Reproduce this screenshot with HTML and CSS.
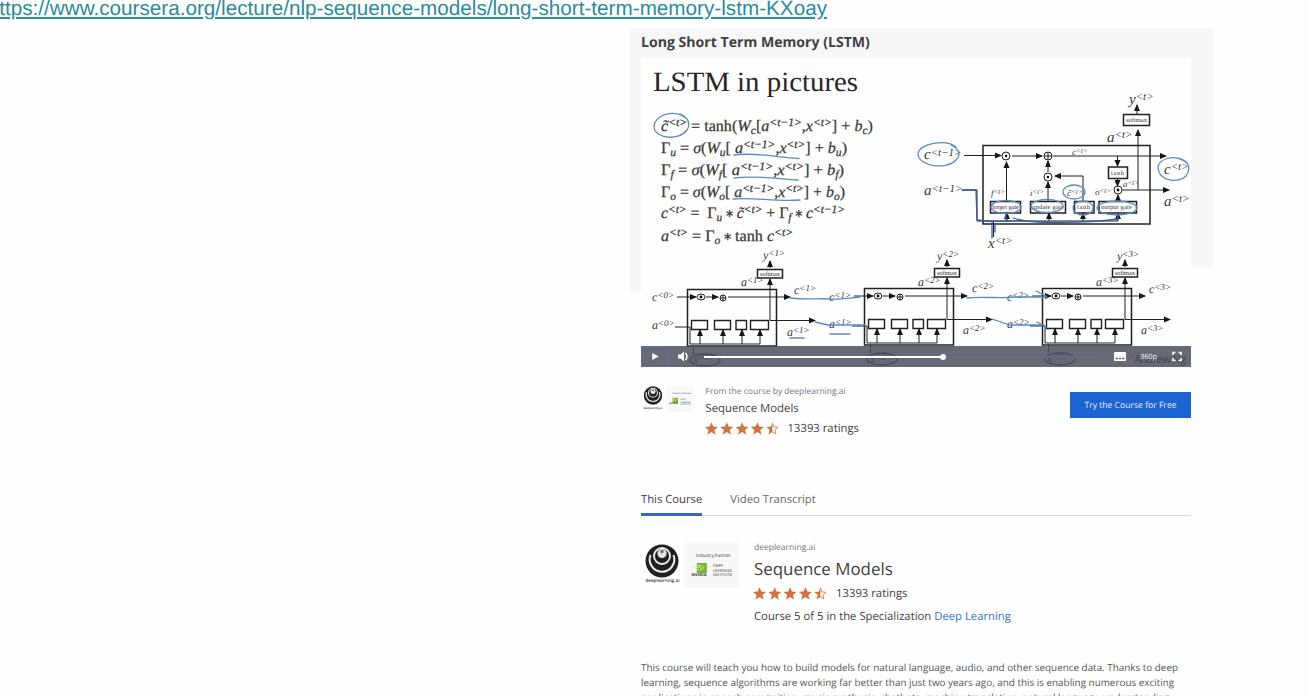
FILE: index.html
```html
<!DOCTYPE html>
<html lang="en">
<head>
<meta charset="utf-8">
<title>Long Short Term Memory (LSTM)</title>
<link rel="stylesheet" href="styles.css">
</head>
<body>
<svg class="defs" aria-hidden="true">
  <defs>
    <marker id="arrow" viewBox="0 0 7 6" markerWidth="7.500" markerHeight="6.500" refX="6" refY="3" orient="auto" markerUnits="userSpaceOnUse"><path d="M0 0L7 3L0 6z" fill="#161616"/></marker>
    <symbol id="star" viewBox="0 0 12 12"><path d="M6 .2L7.700 4.200L12 4.500L8.700 7.300L9.800 11.700L6 9.300L2.200 11.700L3.300 7.300L0 4.500L4.300 4.200z"/></symbol>
    <symbol id="star-half" viewBox="0 0 12 12"><path d="M6 .2V9.300L2.200 11.700L3.300 7.300L0 4.500L4.300 4.200z"/><path d="M6 .8L7.500 4.500L11.300 4.800L8.300 7.400L9.300 11.200L6 9.200" fill="none" stroke="#cf7440" stroke-width=".8"/></symbol>
    <symbol id="rings" viewBox="0 0 34 34"><circle cx="17" cy="17" r="16.500" fill="#202022"/><g fill="none" stroke="#ececec"><path d="M5.500 11A12.300 12.300 0 1 0 28.500 11" stroke-width="2"/><circle cx="17" cy="12" r="8" stroke-width="1.900"/></g><circle cx="17" cy="9.500" r="4.600" fill="#e4e4e4"/><circle cx="17" cy="7.500" r="1.800" fill="#77777a"/></symbol>
    <symbol id="eye" viewBox="0 0 15 11"><path d="M4 0H15V11H4z" fill="#79b52a"/><path d="M0 6Q5 0 12 5Q7 10 3 6Q6 3 9 6" fill="none" stroke="#d3e8b0" stroke-width="1"/></symbol>
    <g id="cell">
      <path class="frame" d="M687.500 289.500H776.500V346H687.500z"/>
      <path class="wire" marker-end="url(#arrow)" d="M677 297H696"/>
      <path class="wire" marker-end="url(#arrow)" d="M706 297H718"/>
      <path class="wire" marker-end="url(#arrow)" d="M728 297H790"/>
      <ellipse class="wire" cx="701" cy="297" rx="4" ry="3"/><circle cx="701" cy="297" r="1.400"/>
      <circle class="wire" cx="723" cy="298" r="3"/><path class="wire" d="M720 298H726M723 295V301"/>
      <path class="gate" d="M691.500 320.500H707.500V329.500H691.500zM714.500 320.500H730.500V329.500H714.500zM736 320.500H746.500V329.500H736zM750.500 320.500H768.500V329.500H750.500z"/>
      <path class="wire" d="M675 327H690V344H760"/>
      <path class="wire" marker-end="url(#arrow)" d="M700 344V330"/><path class="wire" marker-end="url(#arrow)" d="M723 344V330"/><path class="wire" marker-end="url(#arrow)" d="M742 344V330"/><path class="wire" marker-end="url(#arrow)" d="M760 344V330"/>
      <path class="wire" marker-end="url(#arrow)" d="M770 320.500H815"/><path class="wire" marker-end="url(#arrow)" d="M770 320.500V279"/><path class="wire" marker-end="url(#arrow)" d="M770 268V261"/>
      <path class="frame" d="M757.500 269.500H782.500V278H757.500z"/><text class="tiny" x="760" y="276" textLength="20">softmax</text>
      <path class="wire" d="M693.500 346V354"/><ellipse class="ring" cx="705" cy="360" rx="15" ry="6"/>
    </g>
  </defs>
</svg>

<header class="source"><a class="source-link">https://www.coursera.org/lecture/nlp-sequence-models/long-short-term-memory-lstm-KXoay</a></header>

<main class="page">
  <section class="lecture">
    <h1 class="lecture-title">Long Short Term Memory (LSTM)</h1>
    <div class="player">
      <svg class="slide" viewBox="641 58 550 309" width="550" height="309">
        <text class="slide-title" x="653" y="90.500" textLength="205" lengthAdjust="spacingAndGlyphs">LSTM in pictures</text>
        <g class="math">
          <text x="661" y="131" textLength="212" lengthAdjust="spacingAndGlyphs"><tspan class="i">c̃</tspan><tspan class="s" dy="-5">&lt;t&gt;</tspan><tspan dy="5"> = tanh(</tspan><tspan class="i">W</tspan><tspan class="s" dy="3">c</tspan><tspan dy="-3">[</tspan><tspan class="i">a</tspan><tspan class="s" dy="-5">&lt;t−1&gt;</tspan><tspan dy="5">,</tspan><tspan class="i">x</tspan><tspan class="s" dy="-5">&lt;t&gt;</tspan><tspan dy="5">] + </tspan><tspan class="i">b</tspan><tspan class="s" dy="3">c</tspan><tspan dy="-3">)</tspan></text>
          <text x="661" y="153" textLength="186" lengthAdjust="spacingAndGlyphs">Γ<tspan class="s" dy="3">u</tspan><tspan dy="-3"> = </tspan><tspan class="i">σ</tspan>(<tspan class="i">W</tspan><tspan class="s" dy="3">u</tspan><tspan dy="-3">[ </tspan><tspan class="i">a</tspan><tspan class="s" dy="-5">&lt;t−1&gt;</tspan><tspan dy="5">,</tspan><tspan class="i">x</tspan><tspan class="s" dy="-5">&lt;t&gt;</tspan><tspan dy="5">] + </tspan><tspan class="i">b</tspan><tspan class="s" dy="3">u</tspan><tspan dy="-3">)</tspan></text>
          <text x="661" y="175" textLength="183" lengthAdjust="spacingAndGlyphs">Γ<tspan class="s" dy="3">f</tspan><tspan dy="-3"> = </tspan><tspan class="i">σ</tspan>(<tspan class="i">W</tspan><tspan class="s" dy="3">f</tspan><tspan dy="-3">[ </tspan><tspan class="i">a</tspan><tspan class="s" dy="-5">&lt;t−1&gt;</tspan><tspan dy="5">,</tspan><tspan class="i">x</tspan><tspan class="s" dy="-5">&lt;t&gt;</tspan><tspan dy="5">] + </tspan><tspan class="i">b</tspan><tspan class="s" dy="3">f</tspan><tspan dy="-3">)</tspan></text>
          <text x="661" y="197" textLength="184" lengthAdjust="spacingAndGlyphs">Γ<tspan class="s" dy="3">o</tspan><tspan dy="-3"> = </tspan><tspan class="i">σ</tspan>(<tspan class="i">W</tspan><tspan class="s" dy="3">o</tspan><tspan dy="-3">[ </tspan><tspan class="i">a</tspan><tspan class="s" dy="-5">&lt;t−1&gt;</tspan><tspan dy="5">,</tspan><tspan class="i">x</tspan><tspan class="s" dy="-5">&lt;t&gt;</tspan><tspan dy="5">] + </tspan><tspan class="i">b</tspan><tspan class="s" dy="3">o</tspan><tspan dy="-3">)</tspan></text>
          <text x="661" y="218" textLength="184" lengthAdjust="spacingAndGlyphs"><tspan class="i">c</tspan><tspan class="s" dy="-5">&lt;t&gt;</tspan><tspan dy="5"> = &#160;Γ</tspan><tspan class="s" dy="3">u</tspan><tspan dy="-4" class="op"> ∗ </tspan><tspan class="i" dy="1">c̃</tspan><tspan class="s" dy="-5">&lt;t&gt;</tspan><tspan dy="5"> + Γ</tspan><tspan class="s" dy="3">f</tspan><tspan dy="-4" class="op"> ∗ </tspan><tspan class="i" dy="1">c</tspan><tspan class="s" dy="-5">&lt;t−1&gt;</tspan></text>
          <text x="661" y="241" textLength="132" lengthAdjust="spacingAndGlyphs"><tspan class="i">a</tspan><tspan class="s" dy="-5">&lt;t&gt;</tspan><tspan dy="5"> = Γ</tspan><tspan class="s" dy="3">o</tspan><tspan dy="-4" class="op"> ∗ </tspan><tspan dy="1">tanh </tspan><tspan class="i">c</tspan><tspan class="s" dy="-5">&lt;t&gt;</tspan></text>
        </g>

        <path class="frame" d="M983 145.500H1150V224H983z"/>
        <g class="wire">
          <path marker-end="url(#arrow)" d="M964 155.500H1001"/><path marker-end="url(#arrow)" d="M1012 156H1042"/><path marker-end="url(#arrow)" d="M1053 156H1166"/>
          <path marker-end="url(#arrow)" d="M1006.500 201V162"/><path marker-end="url(#arrow)" d="M1048 201V182"/><path marker-end="url(#arrow)" d="M1048 172V161"/>
          <path marker-end="url(#arrow)" d="M1083 201V176H1055"/><path marker-end="url(#arrow)" d="M1117.500 156V166"/><path marker-end="url(#arrow)" d="M1117.500 179V186"/><path marker-end="url(#arrow)" d="M1118 201V195"/>
          <path marker-end="url(#arrow)" d="M1122 190H1169"/><path marker-end="url(#arrow)" d="M1138 190V130"/><path marker-end="url(#arrow)" d="M1137 114V105"/>
          <path marker-end="url(#arrow)" d="M1007 221V213"/><path marker-end="url(#arrow)" d="M1049 221V213"/><path marker-end="url(#arrow)" d="M1083 221V213"/><path marker-end="url(#arrow)" d="M1118 221V213"/>
          <path d="M962 190H977V221H1118M993.500 221V237"/>
          <circle cx="1006" cy="156" r="4"/><circle cx="1048" cy="156" r="4"/><path d="M1044 156H1052M1048 152V160"/><circle cx="1048" cy="177" r="4"/><circle cx="1118" cy="190" r="4"/>
        </g>
        <g><circle cx="1006" cy="156" r="1.200"/><circle cx="1048" cy="177" r="1.200"/><circle cx="1118" cy="190" r="1.400"/></g>
        <path class="frame" d="M1123.500 114.500H1149.500V125.500H1123.500zM1108.500 167H1127.500V178.500H1108.500zM990.500 201.500H1020.500V213H990.500zM1030.500 201.500H1065.500V213H1030.500zM1074.500 201.500H1094V213H1074.500zM1099 201.500H1136.500V213H1099z"/>
        <g class="tiny"><text x="1126" y="122" textLength="21">softmax</text><text x="1111" y="175" textLength="13">tanh</text><text x="992" y="209" textLength="27">forget gate</text><text x="1032" y="209" textLength="32">update gate</text><text x="1077" y="209" textLength="13">tanh</text><text x="1101" y="209" textLength="31">output gate</text></g>
        <g class="label big">
          <text x="924" y="159">c<tspan class="s" dy="-3">&lt;t−1&gt;</tspan></text><text x="924" y="195">a<tspan class="s" dy="-3">&lt;t−1&gt;</tspan></text>
          <text x="1129" y="104">y<tspan class="s" dy="-4">&lt;t&gt;</tspan></text><text x="1107" y="142">a<tspan class="s" dy="-4">&lt;t&gt;</tspan></text>
          <text x="1164" y="174">c<tspan class="s" dy="-4">&lt;t&gt;</tspan></text><text x="1164" y="206">a<tspan class="s" dy="-4">&lt;t&gt;</tspan></text><text x="988" y="248">x<tspan class="s" dy="-4">&lt;t&gt;</tspan></text>
        </g>
        <g class="label small">
          <text x="1072" y="155">c<tspan class="s" dy="-2">&lt;t&gt;</tspan></text><text x="991" y="196">f<tspan class="s" dy="-2">&lt;t&gt;</tspan></text><text x="1030" y="196">i<tspan class="s" dy="-2">&lt;t&gt;</tspan></text><text x="1067" y="196">c̃<tspan class="s" dy="-2">&lt;t&gt;</tspan></text><text x="1095" y="195">o<tspan class="s" dy="-2">&lt;t&gt;</tspan></text><text x="1123" y="187">a<tspan class="s" dy="-2">&lt;t&gt;</tspan></text>
        </g>

        <use href="#cell"/><use href="#cell" x="177" y="-1"/><use href="#cell" x="355" y="-1"/>
        <g class="label">
          <text x="652" y="301">c<tspan class="s" dy="-3">&lt;0&gt;</tspan></text><text x="652" y="329">a<tspan class="s" dy="-3">&lt;0&gt;</tspan></text>
          <text x="763" y="259">y<tspan class="s" dy="-3">&lt;1&gt;</tspan></text><text x="741" y="286">a<tspan class="s" dy="-3">&lt;1&gt;</tspan></text><text x="794" y="294">c<tspan class="s" dy="-3">&lt;1&gt;</tspan></text><text x="787" y="336">a<tspan class="s" dy="-3">&lt;1&gt;</tspan></text><text x="829" y="301">c<tspan class="s" dy="-3">&lt;1&gt;</tspan></text><text x="829" y="328">a<tspan class="s" dy="-3">&lt;1&gt;</tspan></text>
          <text x="937" y="260">y<tspan class="s" dy="-3">&lt;2&gt;</tspan></text><text x="918" y="286">a<tspan class="s" dy="-3">&lt;2&gt;</tspan></text><text x="972" y="292">c<tspan class="s" dy="-3">&lt;2&gt;</tspan></text><text x="963" y="334">a<tspan class="s" dy="-3">&lt;2&gt;</tspan></text><text x="1007" y="301">c<tspan class="s" dy="-3">&lt;2&gt;</tspan></text><text x="1007" y="328">a<tspan class="s" dy="-3">&lt;2&gt;</tspan></text>
          <text x="1117" y="260">y<tspan class="s" dy="-3">&lt;3&gt;</tspan></text><text x="1096" y="286">a<tspan class="s" dy="-3">&lt;3&gt;</tspan></text><text x="1149" y="293">c<tspan class="s" dy="-3">&lt;3&gt;</tspan></text><text x="1141" y="334">a<tspan class="s" dy="-3">&lt;3&gt;</tspan></text>
          <text x="693" y="363">x<tspan class="s" dy="-3">&lt;1&gt;</tspan></text><text x="870" y="363">x<tspan class="s" dy="-3">&lt;2&gt;</tspan></text><text x="1047" y="363">x<tspan class="s" dy="-3">&lt;3&gt;</tspan></text>
        </g>
        <g class="pen">
          <path d="M687 119C674 108 654 115 654 127C655 139 679 141 687 130C691 124 688 117 680 114"/>
          <path d="M734 155C752 152 775 157 799 158.500M734 178C756 175 778 179 798 180M733 199C753 197 776 202 800 200"/>
          <path d="M956 147C946 139 919 143 918 154C919 167 947 170 956 160C961 155 960 149 951 145"/>
          <path d="M1184 161C1174 154 1158 159 1158 168C1159 181 1179 184 1186 176C1192 167 1188 160 1177 158"/>
          <ellipse cx="1006" cy="207" rx="15" ry="6.500"/><ellipse cx="1047" cy="206" rx="16" ry="6.500"/><ellipse cx="1083" cy="208" rx="10" ry="7"/><ellipse cx="1117" cy="208" rx="20" ry="7"/><ellipse cx="1074" cy="192" rx="11" ry="7"/>
          <path class="dark" d="M962 190H976L977 220C1000 223 1012 220 1024 221S1080 224 1118 219V213M992 221V238M995 224V232M1006 220V214M1013 218C1027 222 1040 223 1055 222"/>
          <path d="M790 298C808 300 820 298 830 299S848 298 860 297M815 322L828 325H865M790 338H804M830 334H850"/>
          <path d="M967 298C985 296 1000 299 1014 297H1047M992 319L1010 325H1044M1036 291L1046 296M1037 322L1046 327"/>
        </g>
        <text class="credit" x="1134" y="363" textLength="52">Andrew Ng</text>
      </svg>
      <div class="controls">
        <svg class="play" width="27" height="21" viewBox="0 0 27 21"><path d="M11 6.500L18 10.500L11 14.500z" fill="#fff"/></svg>
        <svg class="volume" width="28" height="21" viewBox="0 0 28 21"><path d="M10 8.500H12.500L16 5.500V15.500L12.500 12.500H10z" fill="#fff"/><path d="M17.500 7Q20.500 10.500 17.500 14" fill="none" stroke="#fff" stroke-width="1.500"/></svg>
        <div class="track"><div class="played"></div><div class="knob"></div></div>
        <svg class="captions" width="12" height="21" viewBox="0 0 12 21"><rect y="6" width="12" height="9" rx="1" fill="#fff"/><path d="M1.500 12.500H4M5 12.500H7M8 12.500H10.500" stroke="#5a5e6c" stroke-width="1.300"/></svg>
        <span class="quality">360p</span>
        <svg class="expand" width="10" height="21" viewBox="0 0 10 21"><path d="M1 9V6.500H3.500M6.500 6.500H9V9M9 12V14.500H6.500M3.500 14.500H1V12" fill="none" stroke="#fff" stroke-width="1.600"/></svg>
      </div>
    </div>
  </section>

  <section class="promo">
    <div class="logos logos-small">
      <svg width="22" height="26" viewBox="0 0 22 26"><use href="#rings" x="2.500" y="0" width="19" height="19"/><text class="logo-word" x="2.500" y="23" textLength="19" lengthAdjust="spacingAndGlyphs">deeplearning.ai</text></svg>
      <svg class="partner" width="28" height="26" viewBox="0 0 56 50" preserveAspectRatio="none"><text class="partner-label" x="12" y="16" textLength="38">Industry Partner</text><use href="#eye" x="9" y="22" width="15" height="11"/><text class="nvidia" x="7" y="35" textLength="17">NVIDIA</text><g class="institute"><text x="29" y="27" textLength="11">DEEP</text><text x="29" y="32" textLength="20">LEARNING</text><text x="29" y="36" textLength="20">INSTITUTE</text></g></svg>
    </div>
    <div class="promo-text">
      <p class="from">From the course by deeplearning.ai</p>
      <p class="promo-name">Sequence Models</p>
      <div class="rating"><svg class="stars" width="74" height="13"><use href="#star" width="13" height="13"/><use href="#star" x="15.300" width="13" height="13"/><use href="#star" x="30.600" width="13" height="13"/><use href="#star" x="45.900" width="13" height="13"/><use href="#star-half" x="61.200" width="12.500" height="13"/></svg><span class="count">13393 ratings</span></div>
    </div>
    <button class="try">Try the Course for Free</button>
  </section>

  <nav class="tabs"><a class="tab active">This Course</a><a class="tab">Video Transcript</a></nav>

  <section class="course">
    <div class="logos">
      <svg width="40" height="47" viewBox="0 0 40 47"><use href="#rings" x="5" y="2" width="34" height="34"/><text class="logo-word wide" x="5.500" y="40" textLength="34">deeplearning.ai</text></svg>
      <svg class="partner" width="55" height="46" viewBox="0 0 55 46"><text class="partner-label" x="12" y="15" textLength="35">Industry Partner</text><use href="#eye" x="9" y="21" width="14" height="10"/><text class="nvidia" x="7.500" y="33.500" textLength="15">NVIDIA</text><g class="institute"><text x="29" y="25" textLength="10">DEEP</text><text x="29" y="29.500" textLength="19">LEARNING</text><text x="29" y="33.500" textLength="19">INSTITUTE</text></g></svg>
    </div>
    <div class="course-text">
      <p class="by">deeplearning.ai</p>
      <h2 class="course-name">Sequence Models</h2>
      <div class="rating"><svg class="stars" width="74" height="13"><use href="#star" width="13" height="13"/><use href="#star" x="15.300" width="13" height="13"/><use href="#star" x="30.600" width="13" height="13"/><use href="#star" x="45.900" width="13" height="13"/><use href="#star-half" x="61.200" width="12.500" height="13"/></svg><span class="count">13393 ratings</span></div>
      <p class="spec">Course 5 of 5 in the Specialization <a class="spec-link">Deep Learning</a></p>
    </div>
  </section>
  <p class="about">This course will teach you how to build models for natural language, audio, and other sequence data. Thanks to deep<br>learning, sequence algorithms are working far better than just two years ago, and this is enabling numerous exciting<br>applications in speech recognition, music synthesis, chatbots, machine translation, natural language understanding,</p>
</main>
</body>
</html>
```
FILE: styles.css
```css
* { box-sizing: border-box; }
body { margin: 0; height: 696px; overflow: hidden; background: #fefefe; color: #3f3f3f; font-family: "Open Sans", "Noto Sans", sans-serif; text-rendering: geometricPrecision; }
p, h1, h2 { margin: 0; font-weight: 400; white-space: nowrap; }
.defs { position: absolute; width: 0; height: 0; }
.source { display: flex; justify-content: flex-end; width: 827px; height: 28px; overflow: hidden; }
.source-link { flex: none; font: 20.7px/22px "Liberation Sans", sans-serif; color: #2c8c98; text-decoration: underline; text-decoration-thickness: 1.5px; text-underline-offset: 1.5px; white-space: nowrap; margin-top: -2px; }
.page { width: 583px; margin-left: 630px; }
.lecture { padding: 0 22px 0 11px; background: linear-gradient(#f7f7f8, #f7f7f8) 0 0 / 11px 265px no-repeat, linear-gradient(#f7f7f8, #f7f7f8) 100% 0 / 572px 30px no-repeat, linear-gradient(#f7f7f8, #f7f7f8) 100% 0 / 22px 239px no-repeat; }
.lecture-title { height: 30px; font-size: 14.1px; line-height: 30px; font-weight: 700; color: #404040; }
.player { position: relative; width: 550px; height: 309px; background: #fefefe; }
.slide { display: block; }
text { font-family: "Liberation Serif", serif; fill: #383838; white-space: pre; }
.slide-title { font-size: 28px; fill: #262626; }
.math text { font-size: 16px; stroke: #383838; stroke-width: .25px; }
.math .s { font-size: 11.5px; font-style: italic; }
.math .op { font-size: 11px; }
.i { font-style: italic; }
.label text { font-size: 12px; font-style: italic; }
.label .s { font-size: 9px; }
.label.big text { font-size: 15px; }
.label.big .s { font-size: 11px; }
.label.small text { font-size: 9px; }
.label.small .s { font-size: 7px; }
.tiny { font-size: 6.5px; }
.frame { fill: none; stroke: #202020; stroke-width: 1.5px; }
.gate { fill: #fefefe; stroke: #202020; stroke-width: 1.4px; }
.wire { fill: none; stroke: #202020; stroke-width: 1px; }
.ring { fill: none; stroke: #23305a; stroke-width: 1.3px; }
.pen { fill: none; stroke: #5b8cc0; stroke-width: 1.3px; stroke-linecap: round; }
.dark { stroke: #375f9d; }
.credit { font-family: "Open Sans", sans-serif; font-size: 11px; fill: #111; }
.controls { position: absolute; inset: auto 0 0 0; display: flex; height: 21px; align-items: center; background: rgba(74, 78, 90, .84); }
.play { border: 1px solid #58709a; }
.volume { flex: none; }
.track { position: relative; width: 395px; height: 2px; margin-left: 8px; background: #666c7e; }
.played { width: 239px; height: 2px; background: #fff; }
.knob { position: absolute; left: 236px; top: -2px; width: 6px; height: 6px; border-radius: 50%; background: #fff; }
.captions { margin-left: 15px; }
.quality { width: 18px; margin-left: 14px; font-size: 7.3px; color: #fff; }
.expand { margin-left: 14px; }
.promo { display: flex; height: 56px; margin: 17px 22px 0 11px; }
.logos { display: flex; width: 113px; flex: none; padding-top: 2px; gap: 3px; }
.logos-small { width: 64.5px; }
.partner { background: #f8f8f9; }
.logo-word, .partner-label, .nvidia, .institute text { font-family: "Open Sans", sans-serif; }
.logo-word { font-size: 3px; fill: #333; font-weight: 600; }
.logo-word.wide { font-size: 4.5px; }
.partner-label { font-size: 4.7px; fill: #333; }
.nvidia { font-size: 4px; font-weight: 700; fill: #111; }
.institute { font-size: 4px; fill: #444; }
.promo-text { flex: 1; }
.from { font-size: 8.5px; line-height: 16px; color: #777; }
.promo-name { font-size: 11.35px; line-height: 18px; }
.rating { display: flex; align-items: center; gap: 9px; height: 21px; font-size: 11.3px; }
.stars { fill: #cf7440; margin-left: -1px; }
.count { line-height: 20px; padding-top: 1px; }
.try { width: 121px; height: 26px; margin: 8px 0 0; padding: 0 0 1px; border: 0; background: #1b64d1; color: #e6effc; font: 8.6px "Open Sans", sans-serif; text-rendering: geometricPrecision; }
.tabs { display: flex; gap: 28px; height: 30px; margin: 46px 22px 0 11px; border-bottom: 1px solid #d6d6d8; }
.tab { height: 30px; font-size: 11.25px; line-height: 28px; color: #666; white-space: nowrap; }
.tab.active { color: #3d3d3d; border-bottom: 3px solid #3569bd; }
.course { display: flex; margin: 24px 22px 0 11px; }
.logos:not(.logos-small) svg:first-child { margin-left: -1px; margin-right: 1px; }
.by { font-size: 8.5px; line-height: 16px; color: #777; }
.course-name { font-size: 16.9px; line-height: 25px; }
.course .rating { height: 24px; }
.spec { font-size: 11.3px; line-height: 23px; }
.spec-link { color: #3577c8; }
.about { margin: 32px 0 0 11px; font-size: 9.88px; line-height: 14.8px; color: #555; }
```
